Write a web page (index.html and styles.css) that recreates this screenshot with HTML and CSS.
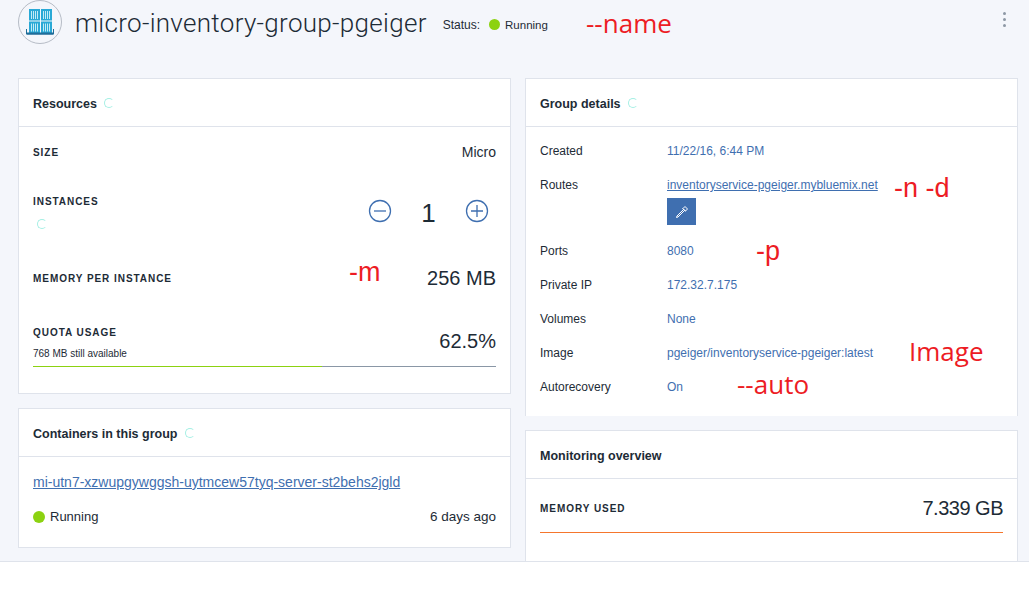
FILE: index.html
```html
<!DOCTYPE html>
<html lang="en">

<head>
    <meta charset="UTF-8">
    <title>micro-inventory-group-pgeiger</title>
    <link rel="stylesheet" href="styles.css">
</head>

<body>
    <div class="page">

        <!-- Group header -->
        <header class="top">
            <div class="logo">
                <svg width="28" height="26" viewBox="0 0 28 26">
                    <rect x="3" y="0" width="11" height="11.5" fill="#29a9d6" />
                    <rect x="15" y="0" width="11" height="11.5" fill="#29a9d6" />
                    <rect x="3" y="12.5" width="11" height="11.5" fill="#29a9d6" />
                    <rect x="15" y="12.5" width="11" height="11.5" fill="#29a9d6" />
                    <path d="M5.500 2v8M7.500 2v8M9.500 2v8M11.500 2v8M17.500 2v8M19.500 2v8M21.500 2v8M23.500 2v8M5.500 14.500v8M7.500 14.500v8M9.500 14.500v8M11.500 14.500v8M17.500 14.500v8M19.500 14.500v8M21.500 14.500v8M23.500 14.500v8" stroke="#c2ebf6" stroke-width="1" />
                    <path d="M0.500 20v5h27v-5" fill="none" stroke="#1f6d99" stroke-width="1" />
                    <rect x="0.500" y="23.500" width="27" height="2" fill="#1f6d99" />
                </svg>
            </div>
            <h1>micro-inventory-group-pgeiger</h1>
            <span class="status-label">Status:</span>
            <span class="dot dot-small"></span>
            <span class="status-text">Running</span>
            <div class="more"><i></i><i></i><i></i></div>
        </header>

        <div class="columns">

            <!-- Left column -->
            <div class="column">
                <section class="card card-resources">
                    <h2 class="card-title">Resources <span class="spinner"></span></h2>
                    <div class="card-body">
                        <div class="row row-size">
                            <span class="caps">SIZE</span>
                            <span class="value-small">Micro</span>
                        </div>
                        <div class="row row-instances">
                            <div>
                                <div class="caps">INSTANCES</div>
                                <span class="spinner spinner-below"></span>
                            </div>
                            <div class="stepper">
                                <svg width="24" height="24" viewBox="0 0 24 24">
                                    <circle cx="12" cy="12" r="10.500" fill="none" stroke="#3f6fb0" stroke-width="1.300" />
                                    <path d="M6 12h12" stroke="#3f6fb0" stroke-width="1.300" />
                                </svg>
                                <span class="count">1</span>
                                <svg width="24" height="24" viewBox="0 0 24 24">
                                    <circle cx="12" cy="12" r="10.500" fill="none" stroke="#3f6fb0" stroke-width="1.300" />
                                    <path d="M6 12h12M12 6v12" stroke="#3f6fb0" stroke-width="1.300" />
                                </svg>
                            </div>
                        </div>
                        <div class="row row-memory">
                            <span class="caps">MEMORY PER INSTANCE</span>
                            <span class="value-big">256 MB</span>
                        </div>
                        <div class="row row-quota">
                            <div>
                                <div class="caps">QUOTA USAGE</div>
                                <div class="note">768 MB still available</div>
                            </div>
                            <span class="value-big">62.5%</span>
                        </div>
                        <div class="bar"><div class="bar-fill" style="width: 62.5%"></div></div>
                    </div>
                </section>

                <section class="card card-containers">
                    <h2 class="card-title">Containers in this group <span class="spinner"></span></h2>
                    <div class="card-body">
                        <a class="container-link" href="#">mi-utn7-xzwupgywggsh-uytmcew57tyq-server-st2behs2jgld</a>
                        <div class="row row-running">
                            <span class="running"><span class="dot"></span>Running</span>
                            <span class="age">6 days ago</span>
                        </div>
                    </div>
                </section>
            </div>

            <!-- Right column -->
            <div class="column">
                <section class="card card-details">
                    <h2 class="card-title">Group details <span class="spinner"></span></h2>
                    <dl class="details">
                        <dt>Created</dt>
                        <dd>11/22/16, 6:44 PM</dd>
                        <dt>Routes</dt>
                        <dd>
                            <a href="#">inventoryservice-pgeiger.mybluemix.net</a>
                            <span class="edit">
                                <svg width="16" height="16" viewBox="0 0 16 16">
                                    <path d="M2.500 13.500l1.500-.5 6.500-6.500-1-1L3 12zM8.500 4.500l3 3M11 2.500l2.500 2.500-2 2-2.500-2.500z" fill="none" stroke="#fff" stroke-width="1" />
                                </svg>
                            </span>
                        </dd>
                        <dt>Ports</dt>
                        <dd>8080</dd>
                        <dt>Private IP</dt>
                        <dd>172.32.7.175</dd>
                        <dt>Volumes</dt>
                        <dd>None</dd>
                        <dt>Image</dt>
                        <dd>pgeiger/inventoryservice-pgeiger:latest</dd>
                        <dt>Autorecovery</dt>
                        <dd>On</dd>
                    </dl>
                </section>

                <section class="card card-monitoring">
                    <h2 class="card-title">Monitoring overview</h2>
                    <div class="card-body">
                        <div class="row row-used">
                            <span class="caps">MEMORY USED</span>
                            <span class="value-big value-used">7.339 GB</span>
                        </div>
                        <div class="bar bar-orange"></div>
                    </div>
                </section>
            </div>
        </div>

        <!-- Notes written over the screenshot -->
        <span class="note-red note-name">--name</span>
        <span class="note-red note-m">-m</span>
        <span class="note-red note-nd">-n -d</span>
        <span class="note-red note-p">-p</span>
        <span class="note-red note-image">Image</span>
        <span class="note-red note-auto">--auto</span>
    </div>
</body>

</html>
```

FILE: styles.css
```css
html,
body {
    margin: 0;
    padding: 0;
    background-color: #fff;
}

body {
    font-family: 'Liberation Sans', sans-serif;
    font-size: 13px;
    color: #1d2b36;
    height: 594px;
    overflow: hidden;
}

.page {
    position: relative;
    width: 1029px;
    height: 561px;
    overflow: hidden;
    background-color: #f4f6fb;
    border-bottom: 1px solid #dfe3eb;
}

/* Header */
.top {
    display: flex;
    align-items: center;
    height: 44px;
    padding: 0 18px;
    margin-bottom: 34px;
}

.logo {
    box-sizing: border-box;
    width: 44px;
    height: 44px;
    margin-top: -1px;
    margin-right: 13px;
    border: 1px solid #b6bcc6;
    border-radius: 50%;
    display: flex;
    align-items: center;
    justify-content: center;
}

.top h1 {
    margin: 2px 16px 0 0;
    font-family: 'Roboto', sans-serif;
    font-size: 26px;
    font-weight: 300;
    letter-spacing: 0.3px;
    color: #1d2b36;
}

.status-label,
.status-text {
    font-size: 12px;
    margin-top: 5px;
}

.status-text {
    font-size: 11.5px;
}

.status-label {
    margin-right: 9px;
}

.dot {
    display: inline-block;
    width: 12px;
    height: 12px;
    border-radius: 50%;
    background-color: #8cd211;
}

.dot-small {
    width: 11px;
    height: 11px;
    margin-top: 5px;
    margin-right: 5px;
}

.more {
    margin-left: auto;
    margin-right: 5px;
    margin-top: -5px;
    display: flex;
    flex-direction: column;
    gap: 3px;
}

.more i {
    display: block;
    width: 3px;
    height: 3px;
    border-radius: 50%;
    background-color: #8d98a5;
}

/* Columns and cards */
.columns {
    display: flex;
    gap: 14px;
    padding: 0 11px 0 18px;
}

.column {
    width: 493px;
    display: flex;
    flex-direction: column;
    gap: 14px;
}

.card {
    box-sizing: border-box;
    background-color: #fff;
    border: 1px solid #dfe3eb;
}

.card-resources {
    height: 316px;
}

.card-containers {
    height: 140px;
}

.card-details {
    height: 338px;
    border-bottom: none;
}

.card-monitoring {
    height: 140px;
}

.card-title {
    box-sizing: border-box;
    height: 48px;
    margin: 0;
    padding: 18px 14px 0;
    font-size: 12.5px;
    line-height: 14px;
    font-weight: 700;
    border-bottom: 1px solid #dfe3eb;
}

.card-body {
    padding: 0 14px;
}

.spinner {
    display: inline-block;
    box-sizing: border-box;
    width: 10px;
    height: 10px;
    margin-left: 4px;
    border: 1.5px solid #a5efe4;
    border-right-color: transparent;
    border-radius: 50%;
}

.spinner-below {
    margin: 12px 0 0 4px;
    display: block;
}

.row {
    display: flex;
    justify-content: space-between;
    align-items: center;
}

.caps {
    font-size: 10px;
    font-weight: 700;
    letter-spacing: 0.95px;
}

.value-small {
    font-size: 14px;
}

.value-big {
    font-size: 20px;
}

.value-used {
    letter-spacing: -0.5px;
}

.row-size {
    height: 16px;
    margin-top: 17px;
}

.row-instances {
    align-items: flex-start;
    margin-top: 36px;
    height: 40px;
}

.stepper {
    display: flex;
    align-items: center;
    margin-right: 7px;
}

.stepper svg {
    margin-top: -4px;
}

.count {
    width: 73px;
    text-align: center;
    font-size: 26px;
    margin-top: 2px;
}

.row-memory {
    margin-top: 29px;
    height: 26px;
}

.row-quota {
    margin-top: 36px;
    height: 36px;
    align-items: flex-start;
}

.row-quota .value-big {
    margin-top: 3px;
}

.note {
    font-size: 10px;
    margin-top: 10px;
}

.bar {
    height: 1px;
    margin-top: 3px;
    background-color: #8a97a6;
}

.bar-fill {
    height: 1px;
    background-color: #8cd211;
}

.bar-orange {
    background-color: #f5762d;
    margin-top: 9px;
}

.row-used {
    margin-top: 14px;
    height: 30px;
}

/* Containers card */
.container-link {
    display: block;
    margin-top: 17px;
    font-size: 14px;
    color: #3f6fb0;
}

.row-running {
    margin-top: 19px;
}

.running {
    display: flex;
    align-items: center;
    gap: 5px;
}

.age {
    font-size: 13.5px;
}

/* Details list */
.details {
    display: grid;
    grid-template-columns: 127px 1fr;
    row-gap: 19px;
    margin: 0;
    padding: 17px 14px 0;
    font-size: 12px;
    line-height: 15px;
}

.details dt {
    margin: 0;
}

.details dd {
    margin: 0;
    color: #3f6fb0;
}

.details a {
    color: #3f6fb0;
}

.edit {
    display: flex;
    align-items: center;
    justify-content: center;
    width: 29px;
    height: 27px;
    margin-top: 5px;
    background-color: #3f6fb0;
}

/* Red notes */
.note-red {
    position: absolute;
    font-family: 'Open Sans', sans-serif;
    font-size: 26px;
    color: #ed1c24;
    line-height: 1;
}

.note-name {
    left: 586px;
    top: 10px;
}

.note-m {
    left: 349px;
    top: 259px;
    font-size: 27px;
    font-family: 'Liberation Sans', sans-serif;
}

.note-nd {
    left: 894px;
    top: 175px;
    font-size: 27px;
    font-family: 'Liberation Sans', sans-serif;
}

.note-p {
    left: 756px;
    top: 238px;
    font-size: 27px;
    font-family: 'Liberation Sans', sans-serif;
}

.note-image {
    left: 909px;
    top: 338px;
}

.note-auto {
    left: 737px;
    top: 371px;
}
```
